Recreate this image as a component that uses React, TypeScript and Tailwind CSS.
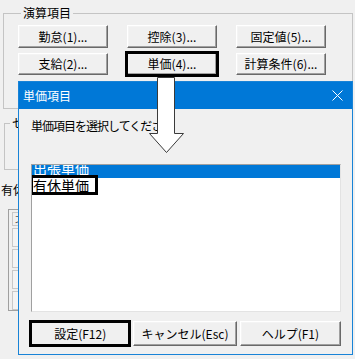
import React from "react";

function Btn({ children, className = "" }: { children: React.ReactNode; className?: string }) {
  return (
    <div
      className={`flex items-center justify-center bg-[#f0f0f0] border border-t-white border-l-white border-r-[#696969] border-b-[#696969] shadow-[inset_-1px_-1px_0_#a0a0a0,inset_1px_1px_0_#f4f4f4] text-[12px] leading-none text-black ${className}`}
    >
      {children}
    </div>
  );
}

export default function App() {
  return (
    <div className="relative w-[355px] h-[359px] overflow-hidden bg-[#f0f0f0] text-black font-['Noto_Sans_CJK_JP','Noto_Sans',sans-serif]">
      {/* Main group box */}
      <fieldset className="ml-[3px] mt-[5px] h-[104px] w-[350px] border border-solid border-[#c4c4c4] px-[14px]">
        <legend className="ml-[3px] px-[2px] text-[12px] leading-[16px]">演算項目</legend>
        <div className="mt-[4px] grid grid-cols-[90px_90px_90px] grid-rows-[23px_22px] gap-x-[19px] gap-y-[5px]">
          <Btn>勤怠(1)...</Btn>
          <Btn>控除(3)...</Btn>
          <Btn>固定値(5)...</Btn>
          <Btn>支給(2)...</Btn>
          <Btn className="outline-[3px] outline-solid outline-black outline-offset-[-1px]">単価(4)...</Btn>
          <Btn>計算条件(6)...</Btn>
        </div>
      </fieldset>

      {/* Second group box (mostly hidden) */}
      <fieldset className="ml-[4px] mt-[6px] h-[55px] w-[300px] border border-solid border-[#c4c4c4]">
        <legend className="ml-[5px] px-[2px] text-[12px] leading-[16px]">セット</legend>
      </fieldset>

      <div className="mt-[13px] pl-[1px] text-[12px] leading-[14px]">有休日数</div>

      {/* Grid (mostly hidden) */}
      <div className="ml-[8px] mt-[12px] flex h-[102px] w-[200px] flex-col gap-[2px] border border-[#a0a0a0] pl-[3px] pt-[2px]">
        <div className="h-[14px] border border-[#c8c8c8] pl-[2px] text-[11px] leading-[12px] text-[#555]">才</div>
        <div className="h-[19px] border border-[#c8c8c8] bg-[#f4f4f4]" />
        <div className="h-[19px] border border-[#c8c8c8] bg-[#f4f4f4]" />
        <div className="h-[19px] border border-[#c8c8c8] bg-[#f4f4f4]" />
        <div className="h-[19px] border border-[#c8c8c8] bg-[#f4f4f4]" />
      </div>

      {/* Dialog window */}
      <div className="absolute left-[18px] top-[81px] flex h-[274px] w-[335px] flex-col border border-[#1883d7] bg-[#f0f0f0]">
        <div className="flex h-[27px] items-center justify-between bg-[#0078d7] pl-[4px] pr-[9px] text-[12px] text-white">
          <span className="leading-[14px]">単価項目</span>
          <svg width="11" height="11" viewBox="0 0 11 11">
            <path d="M0.5 0.5 L10.5 10.5 M10.5 0.5 L0.5 10.5" stroke="white" strokeWidth="1" />
          </svg>
        </div>
        <div className="flex flex-col pl-[12px] pr-[11px]">
          <div className="mt-[10px] h-[14px] text-[12px] leading-[14px] tracking-[-1px]">単価項目を選択してください</div>
          <div className="mt-[31px] h-[148px] w-[310px] overflow-hidden border border-t-[#a0a0a0] border-l-[#a0a0a0] border-r-[#e3e3e3] border-b-[#e3e3e3] bg-white">
            <div className="-mt-[5px] flex flex-col">
              <div className="h-[18px] bg-[#0078d7] pl-[1px] text-[14px] leading-[17px] text-white">出張単価</div>
              <div className="h-[17px] pl-[1px] text-[14px] leading-[16px]">
                <span className="inline-block h-[14px] w-[62px] align-top leading-[14px] outline-[3px] outline-solid outline-black">有休単価</span>
              </div>
            </div>
          </div>
          <div className="-ml-[1px] mt-[9px] flex gap-[3px]">
            <Btn className="h-[25px] w-[101px] outline-[3px] outline-solid outline-black outline-offset-[-2px]">設定(F12)</Btn>
            <Btn className="h-[25px] w-[104px]">キャンセル(Esc)</Btn>
            <Btn className="h-[25px] w-[102px]">ヘルプ(F1)</Btn>
          </div>
        </div>
      </div>

      {/* Annotation arrow */}
      <svg className="pointer-events-none absolute left-0 top-0" width="355" height="359" viewBox="0 0 355 359">
        <polygon
          points="157.5,77.5 174.5,77.5 174.5,133.5 183.5,133.5 166.5,152.5 149.5,133.5 157.5,133.5"
          fill="white"
          stroke="#3a3a3a"
          strokeWidth="1"
        />
      </svg>
    </div>
  );
}
